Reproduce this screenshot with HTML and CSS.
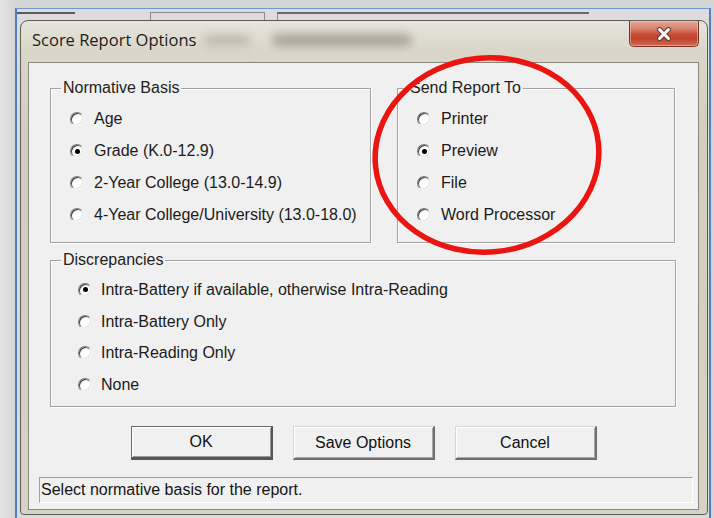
FILE: index.html
```html
<!DOCTYPE html>
<html>
<head>
<meta charset="utf-8">
<title>Score Report Options</title>
<link rel="stylesheet" href="styles.css">
</head>
<body>
<div class="screen">
  <div class="parent">
    <div class="parent-strip">
      <span class="tb tb-a"></span>
      <span class="tb tb-b"></span>
      <span class="tb tb-c"></span>
    </div>
    <div class="dialog">
      <div class="titlebar">
        <span class="title">Score Report Options</span>
        <span class="glass-blur b1"></span>
        <span class="glass-blur b2"></span>
        <button class="close" aria-label="Close">
          <svg width="16" height="14" viewBox="0 0 16 14">
            <path d="M3.5 2.5 L12.5 11.5 M12.5 2.5 L3.5 11.5" stroke="#6b3a30" stroke-width="5" stroke-linecap="round" fill="none"/>
            <path d="M3.5 2.5 L12.5 11.5 M12.5 2.5 L3.5 11.5" stroke="#ffffff" stroke-width="3" stroke-linecap="round" fill="none"/>
          </svg>
        </button>
      </div>
      <div class="client">
        <div class="content">
          <div class="top-row">
            <div class="group">
              <div class="group-title">Normative Basis</div>
              <div class="options">
                <label class="opt"><span class="radio"></span>Age</label>
                <label class="opt"><span class="radio on"></span>Grade (K.0-12.9)</label>
                <label class="opt"><span class="radio"></span>2-Year College (13.0-14.9)</label>
                <label class="opt"><span class="radio"></span>4-Year College/University (13.0-18.0)</label>
              </div>
            </div>
            <div class="group">
              <div class="group-title">Send Report To</div>
              <div class="options">
                <label class="opt"><span class="radio"></span>Printer</label>
                <label class="opt"><span class="radio on"></span>Preview</label>
                <label class="opt"><span class="radio"></span>File</label>
                <label class="opt"><span class="radio"></span>Word Processor</label>
              </div>
            </div>
          </div>
          <div class="group disc">
            <div class="group-title">Discrepancies</div>
            <div class="options">
              <label class="opt"><span class="radio on"></span>Intra-Battery if available, otherwise Intra-Reading</label>
              <label class="opt"><span class="radio"></span>Intra-Battery Only</label>
              <label class="opt"><span class="radio"></span>Intra-Reading Only</label>
              <label class="opt"><span class="radio"></span>None</label>
            </div>
          </div>
        </div>
        <div class="buttons">
          <button class="btn default">OK</button>
          <button class="btn">Save Options</button>
          <button class="btn">Cancel</button>
        </div>
        <div class="statusbar">Select normative basis for the report.</div>
      </div>
    </div>
  </div>
  <svg class="annotation" width="714" height="518" viewBox="0 0 714 518">
    <ellipse cx="487" cy="155" rx="112" ry="97" transform="rotate(-6 487 155)" fill="none" stroke="#ea1410" stroke-width="5.5"/>
  </svg>
</div>
</body>
</html>
```
FILE: styles.css
```css
* {
  box-sizing: border-box;
}

html, body {
  margin: 0;
  padding: 0;
}

body {
  background: #e9e9e9;
  font-family: "Liberation Sans", Arial, sans-serif;
  font-size: 16px;
  color: #1b1b1b;
}

.screen {
  position: relative;
  width: 714px;
  height: 518px;
  padding: 8px 3px 0 15px;
  overflow: hidden;
  background: linear-gradient(90deg, #e4e4e4 0, #d6d6d6 15px);
}

/* owner window peeking out behind the dialog */
.parent {
  height: 510px;
  border-top: 1px solid #7298d0;
  border-left: 2px solid #4f7ec4;
  border-right: 2px solid #4f7ec4;
  background: #dcdcdc;
}

.parent-strip {
  height: 11px;
  display: flex;
  align-items: flex-start;
  padding-top: 3px;
}

.tb {
  display: block;
  height: 8px;
}

.tb-a {
  width: 58px;
  border-top: 2px solid #5c5c5c;
}

.tb-b {
  width: 115px;
  margin-left: 75px;
  border: 1px solid #8a8a8a;
  border-bottom: none;
}

.tb-c {
  width: 312px;
  margin-left: 12px;
  border-top: 2px solid #6a6a6a;
  border-left: 1px solid #8a8a8a;
}

/* dialog frame */
.dialog {
  margin: 0 1px 0 3px;
  height: 495px;
  border: 1px solid #5f5c53;
  border-radius: 8px 8px 4px 4px;
  background: linear-gradient(180deg, #e6e4dc 0, #dad6c9 30px, #d2cdbe 120px, #d6d2c5 100%);
  display: flex;
  flex-direction: column;
  overflow: hidden;
}

.titlebar {
  height: 41px;
  flex: none;
  display: flex;
  align-items: flex-start;
}

.title {
  margin: 9px 0 0 11px;
  line-height: 20px;
  font-family: "Open Sans", "Noto Sans", sans-serif;
  font-size: 16.5px;
  color: #1c1c1c;
}

.glass-blur {
  display: block;
  background: rgba(70, 64, 50, 0.45);
  filter: blur(5px);
  border-radius: 6px;
}

.b1 {
  width: 46px;
  height: 10px;
  margin: 14px 0 0 8px;
  opacity: 0.5;
}

.b2 {
  width: 140px;
  height: 12px;
  margin: 13px 0 0 22px;
  opacity: 0.8;
}

.close {
  margin: 0 8px 0 auto;
  width: 70px;
  height: 26px;
  padding: 0;
  border: 1px solid #7a3328;
  border-top: none;
  border-radius: 0 0 5px 5px;
  background: linear-gradient(180deg, #e6a595 0, #d8826f 30%, #c64a33 55%, #c0432c 70%, #d06a52 100%);
  box-shadow: inset 0 0 0 1px rgba(255, 220, 210, 0.45);
  display: flex;
  align-items: center;
  justify-content: center;
}

/* client area */
.client {
  height: 448px;
  flex: none;
  margin: 0 8px 0 7px;
  border: 1px solid #8a877c;
  background: #f0f0f0;
  display: flex;
  flex-direction: column;
}

.content {
  padding: 25px 22px 0 21px;
}

.top-row {
  display: grid;
  grid-template-columns: 321px 278px;
  column-gap: 26px;
}

.group {
  height: 155px;
  border: 1px solid #a3a3a3;
  box-shadow: inset 1px 1px #fff, 1px 1px #fff;
}

.group-title {
  width: fit-content;
  margin: -10px 0 0 10px;
  padding: 0 2px;
  line-height: 18px;
  background: #f0f0f0;
  color: #222;
}

.options {
  margin-top: 6px;
  display: flex;
  flex-direction: column;
}

.opt {
  height: 32px;
  display: flex;
  align-items: center;
  gap: 10px;
  padding-left: 19px;
  white-space: nowrap;
}

.radio {
  flex: none;
  width: 14px;
  height: 14px;
  border-radius: 50%;
  border: 1px solid;
  border-color: #7c7c7c #f4f4f4 #f4f4f4 #7c7c7c;
  background: #fff;
  box-shadow: inset 1px 1px #3c3c3c, inset -1px -1px #e2e2e2;
  display: grid;
  place-items: center;
}

.radio.on::after {
  content: "";
  width: 5px;
  height: 5px;
  border-radius: 50%;
  background: #000;
}

.group.disc {
  margin-top: 17px;
  height: 147px;
}

.disc .options {
  margin-top: 5px;
}

.disc .opt {
  height: 31.7px;
  padding-left: 27px;
  gap: 9px;
}

/* command buttons */
.buttons {
  margin-top: 19px;
  display: flex;
  justify-content: center;
  gap: 20px;
}

.btn {
  width: 142px;
  height: 34px;
  padding: 0;
  font-family: "Liberation Sans", Arial, sans-serif;
  font-size: 16px;
  color: #111;
  background: #f0f0f0;
  border-style: solid;
  border-width: 1px 2px 2px 1px;
  border-color: #d6d6d6 #6e6e6e #6e6e6e #d6d6d6;
  box-shadow: inset 1px 1px #fff, inset -1px -1px #a8a8a8;
}

.btn.default {
  border-width: 1px 2px 3px 1px;
  border-color: #6a6a6a #555 #555 #6a6a6a;
  box-shadow: inset 1px 1px #fff, inset -1px -1px #9a9a9a;
}

/* status line */
.statusbar {
  margin: 17px 5px 0 10px;
  height: 26px;
  padding-left: 1px;
  line-height: 24px;
  border: 1px solid;
  border-color: #a0a0a0 #fff #fff #a0a0a0;
  color: #151515;
}

/* hand-drawn marker around the destination choices */
.annotation {
  position: absolute;
  left: 0;
  top: 0;
  pointer-events: none;
}
```
